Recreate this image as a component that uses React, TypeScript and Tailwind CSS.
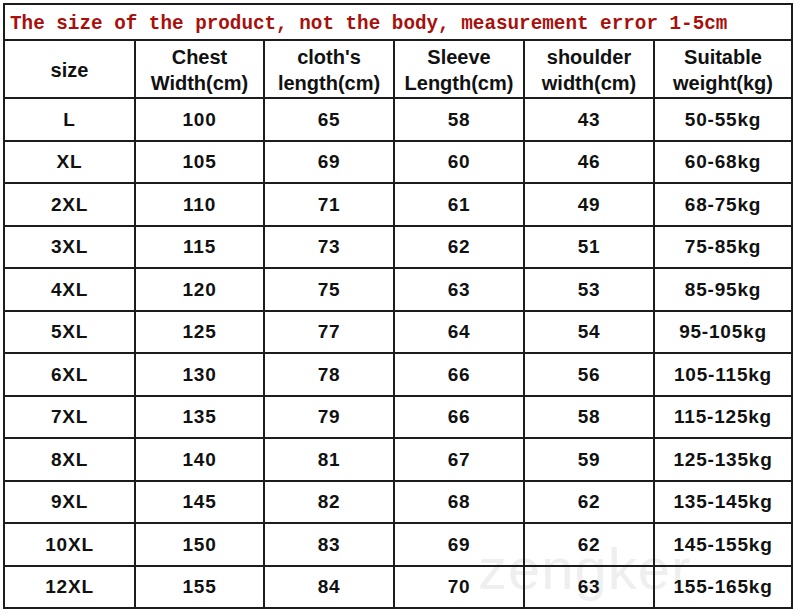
const filas = [
  ['L', '100', '65', '58', '43', '50-55kg'],
  ['XL', '105', '69', '60', '46', '60-68kg'],
  ['2XL', '110', '71', '61', '49', '68-75kg'],
  ['3XL', '115', '73', '62', '51', '75-85kg'],
  ['4XL', '120', '75', '63', '53', '85-95kg'],
  ['5XL', '125', '77', '64', '54', '95-105kg'],
  ['6XL', '130', '78', '66', '56', '105-115kg'],
  ['7XL', '135', '79', '66', '58', '115-125kg'],
  ['8XL', '140', '81', '67', '59', '125-135kg'],
  ['9XL', '145', '82', '68', '62', '135-145kg'],
  ['10XL', '150', '83', '69', '62', '145-155kg'],
  ['12XL', '155', '84', '70', '63', '155-165kg'],
];

const cabecalho = [
  ['size'],
  ['Chest', 'Width(cm)'],
  ["cloth's", 'length(cm)'],
  ['Sleeve', 'Length(cm)'],
  ['shoulder', 'width(cm)'],
  ['Suitable', 'weight(kg)'],
];

const colunas = ['w-[131px]', 'w-[129px]', 'w-[130px]', 'w-[130px]', 'w-[130px]', 'w-[138px]'];

function App() {
  return (
    <div className="relative w-[800px] h-[615px] bg-white overflow-hidden pl-[3px] pt-[3px]">
      {/* marca d'agua, por baixo da tabela */}
      <div
        className="absolute left-[478px] top-[540px] z-0 text-[58px] leading-none text-[#efefef] pointer-events-none tracking-[1px]"
        style={{ fontFamily: '"Liberation Sans", Arial, sans-serif' }}
      >
        zengker
      </div>

      <table
        className="relative z-10 border-collapse table-fixed text-[#111] font-bold"
        style={{ fontFamily: '"Liberation Sans", Arial, sans-serif' }}
      >
        <colgroup>
          {colunas.map((c, i) => (
            <col key={i} className={c} />
          ))}
        </colgroup>
        <tbody>
          {/* --- TITULO --- */}
          <tr className="h-[36px]">
            <td
              colSpan={6}
              className="border-2 border-[#1c1c1c] pl-[5px] pt-[5px] text-[19.3px] leading-none text-[#a8100c] whitespace-nowrap"
              style={{ fontFamily: '"Liberation Mono", "Courier New", monospace' }}
            >
              The size of the product, not the body, measurement error 1-5cm
            </td>
          </tr>

          {/* --- CABECALHO --- */}
          <tr className="h-[58px]">
            {cabecalho.map((linhas, i) => (
              <td key={i} className="border-2 border-[#1c1c1c] text-center align-middle text-[20px] leading-[26px] pt-[1px]">
                {linhas.map((l) => (
                  <div key={l}>{l}</div>
                ))}
              </td>
            ))}
          </tr>

          {/* --- DADOS --- */}
          {filas.map((fila) => (
            <tr key={fila[0]} className="h-[42.5px]">
              {fila.map((v, i) => (
                <td key={i} className="border-2 border-[#1c1c1c] text-center align-middle text-[19px] leading-none tracking-[0.8px]">
                  {v}
                </td>
              ))}
            </tr>
          ))}
        </tbody>
      </table>
    </div>
  );
}

export default App;
